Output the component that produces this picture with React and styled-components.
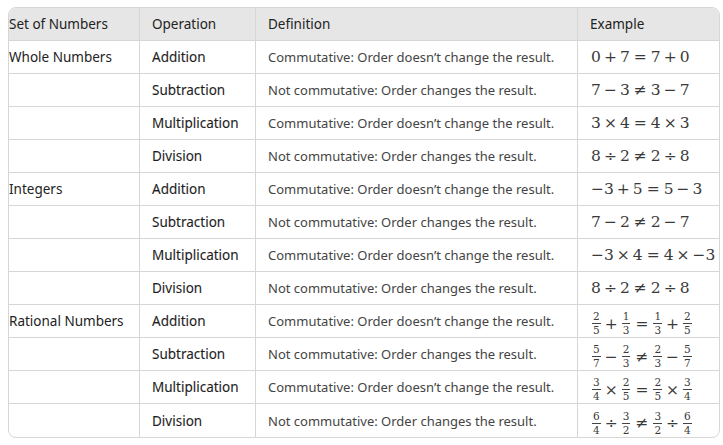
import React from "react";
import styled, { createGlobalStyle } from "styled-components";

const GlobalStyle = createGlobalStyle`
  body {
    margin: 0;
    padding: 7px 4px 0 8px;
    background: #fff;
    font-family: "Noto Sans", "Open Sans", sans-serif;
    color: #222;
  }
`;

const rows = [
  ["Whole Numbers", "Addition", true, [["0"], "+", ["7"], "=", ["7"], "+", ["0"]]],
  ["", "Subtraction", false, [["7"], "−", ["3"], "≠", ["3"], "−", ["7"]]],
  ["", "Multiplication", true, [["3"], "×", ["4"], "=", ["4"], "×", ["3"]]],
  ["", "Division", false, [["8"], "÷", ["2"], "≠", ["2"], "÷", ["8"]]],
  ["Integers", "Addition", true, [["−3"], "+", ["5"], "=", ["5"], "−", ["3"]]],
  ["", "Subtraction", false, [["7"], "−", ["2"], "≠", ["2"], "−", ["7"]]],
  ["", "Multiplication", true, [["−3"], "×", ["4"], "=", ["4"], "×", ["−3"]]],
  ["", "Division", false, [["8"], "÷", ["2"], "≠", ["2"], "÷", ["8"]]],
  ["Rational Numbers", "Addition", true, [["2", "5"], "+", ["1", "3"], "=", ["1", "3"], "+", ["2", "5"]]],
  ["", "Subtraction", false, [["5", "7"], "−", ["2", "3"], "≠", ["2", "3"], "−", ["5", "7"]]],
  ["", "Multiplication", true, [["3", "4"], "×", ["2", "5"], "=", ["2", "5"], "×", ["3", "4"]]],
  ["", "Division", false, [["6", "4"], "÷", ["3", "2"], "≠", ["3", "2"], "÷", ["6", "4"]]],
];

const COMM = "Commutative: Order doesn’t change the result.";
const NOT = "Not commutative: Order changes the result.";

export default function App() {
  return (
    <>
      <GlobalStyle />
      <Table>
        <colgroup>
          <col style={{ width: 131 }} />
          <col style={{ width: 116 }} />
          <col style={{ width: 322 }} />
          <col />
        </colgroup>
        <thead>
          <tr>
            <Th $first>Set of Numbers</Th>
            <Th>Operation</Th>
            <Th>Definition</Th>
            <Th>Example</Th>
          </tr>
        </thead>
        <tbody>
          {rows.map(([set, op, comm, expr], i) => (
            <tr key={i}>
              <Td $first>{set}</Td>
              <OpCell>{op}</OpCell>
              <DefCell>{comm ? COMM : NOT}</DefCell>
              <MathCell>
                <Expr>
                  {expr.map((t, j) =>
                    typeof t === "string" ? (
                      <Op key={j} $rel={t === "=" || t === "≠"}>
                        {t}
                      </Op>
                    ) : t.length === 2 ? (
                      <Frac key={j}>
                        <span>{t[0]}</span>
                        <span>{t[1]}</span>
                      </Frac>
                    ) : (
                      <span key={j}>{t[0]}</span>
                    )
                  )}
                </Expr>
              </MathCell>
            </tr>
          ))}
        </tbody>
      </Table>
    </>
  );
}

const Table = styled.table`
  width: 712px;
  border-collapse: separate;
  border-spacing: 0;
  border: 1px solid #d6d6d6;
  border-radius: 8px;
  overflow: hidden;
  font-size: 13.5px;
  table-layout: fixed;

  th, td { box-sizing: border-box; }
  tr > *:last-child { border-right: none; }
  tbody tr:last-child > * { border-bottom: none; }
`;

const Th = styled.th`
  background: #e6e6e6;
  font-weight: 400;
  text-align: left;
  height: 33px;
  padding: 0 12px;
  padding-left: ${(p) => (p.$first ? "0" : "12px")};
  border-right: 1px solid #d6d6d6;
  border-bottom: 1px solid #d6d6d6;
  color: #222;
`;

const Td = styled.td`
  height: 33px;
  padding: 0 12px;
  padding-left: ${(p) => (p.$first ? "0" : "12px")};
  border-right: 1px solid #d6d6d6;
  border-bottom: 1px solid #d6d6d6;
  white-space: nowrap;
  color: #222;
`;

const OpCell = styled(Td)`
  color: #1e1e1e;
  -webkit-text-stroke: 0.1px #1e1e1e;
`;

const DefCell = styled(Td)`
  color: #444;
  font-size: 13px;
`;

const MathCell = styled(Td)`
  padding-left: 13px;
`;

const Expr = styled.span`
  display: inline-flex;
  align-items: center;
  font-family: "DejaVu Serif", serif;
  font-size: 15.5px;
  color: #3a3a3a;
`;

const Op = styled.span`
  margin: 0 ${(p) => (p.$rel ? "4px" : "3px")};
`;

const Frac = styled.span`
  display: inline-flex;
  flex-direction: column;
  align-items: center;
  font-size: 10.5px;
  line-height: 11px;
  padding: 0 1px;

  span:first-child {
    border-bottom: 0.8px solid #444;
    padding: 0 1px 1px;
  }
  span:last-child {
    padding-top: 1px;
  }
`;
